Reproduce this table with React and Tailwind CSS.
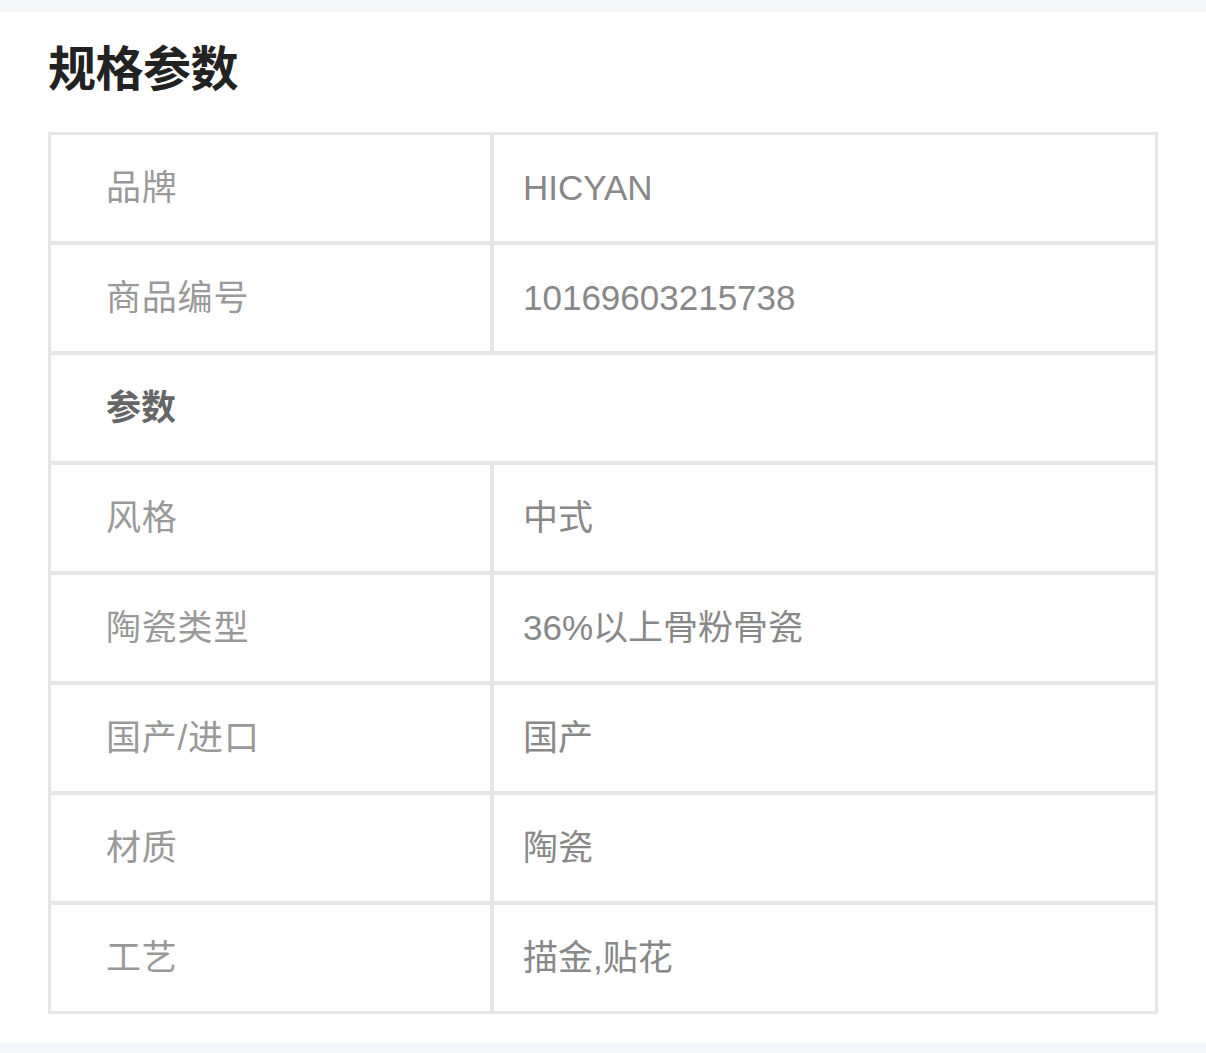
import React from 'react';

const rows = [
    { label: '品牌', value: 'HICYAN' },
    { label: '商品编号', value: '10169603215738' },
    { group: '参数' },
    { label: '风格', value: '中式' },
    { label: '陶瓷类型', value: '36%以上骨粉骨瓷' },
    { label: '国产/进口', value: '国产' },
    { label: '材质', value: '陶瓷' },
    { label: '工艺', value: '描金,贴花' },
];

export default function App() {
    return (
        <div className="min-h-[1053px] bg-[#f5f6fa] pt-[12px] pb-[10px]" style={{ fontFamily: '"Liberation Sans", "Noto Sans CJK SC", sans-serif' }}>
            <div className="bg-white px-[48px] pt-[34px] pb-[29px]">
                <h2 className="text-[48px] leading-[48px] font-bold text-[#222] tracking-[-0.5px]">规格参数</h2>
                <table className="mt-[38px] w-[1110px] border border-[#e6e6e6] border-separate border-spacing-0 table-fixed">
                    <colgroup>
                        <col className="w-[443px]" />
                        <col />
                    </colgroup>
                    <tbody>
                        {rows.map((r, i) =>
                            r.group ? (
                                <tr key={i} className="h-[110px]">
                                    <td colSpan={2} className="border-2 border-[#e6e6e6] pl-[55px] text-[35px] font-bold text-[#666] align-middle">
                                        {r.group}
                                    </td>
                                </tr>
                            ) : (
                                <tr key={i} className="h-[110px]">
                                    <td className="border-2 border-[#e6e6e6] pl-[55px] text-[35px] text-[#999] align-middle tracking-[0.8px]">{r.label}</td>
                                    <td className="border-2 border-[#e6e6e6] pl-[29px] text-[35px] text-[#888] align-middle">{r.value}</td>
                                </tr>
                            )
                        )}
                    </tbody>
                </table>
            </div>
        </div>
    );
}
